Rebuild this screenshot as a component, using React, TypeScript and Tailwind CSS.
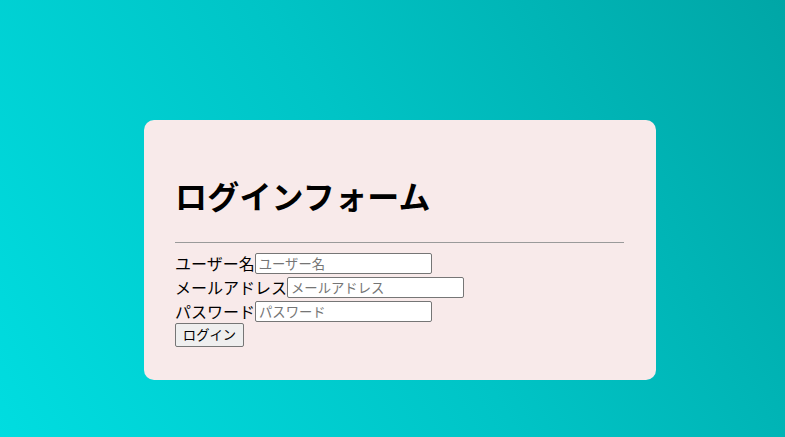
export default function App() {
  return (
    <div className="h-[437px] w-full overflow-hidden bg-[linear-gradient(60deg,#00dde0_0%,#00c4c6_50%,#00a6a6_100%)] pt-[120px] pl-[144px] font-['Noto_Sans_CJK_JP','Noto_Sans',sans-serif] text-black">

      <div className="w-[512px] h-[260px] rounded-[10px] bg-[#f8eaea] px-[31px] pt-[32px]">

        <h1 className="mt-[25px] text-[32px] leading-[37px] font-bold tracking-[0.2px]">
          ログインフォーム
        </h1>

        <hr className="mt-[28px] w-[449px] border-0 border-t border-[#9a9a9a]" />

        <div className="mt-[8px]">

          <div className="flex h-[24px] items-center text-[16px]">
            <span>ユーザー名</span>
            <input
              type="text"
              placeholder="ユーザー名"
              className="h-[21px] w-[177px] rounded-[2px] border border-[#767676] bg-white px-[3px] text-[13.33px] placeholder:text-[#757575] outline-none"
            />
          </div>

          <div className="flex h-[24px] items-center text-[16px]">
            <span>メールアドレス</span>
            <input
              type="email"
              placeholder="メールアドレス"
              className="h-[21px] w-[177px] rounded-[2px] border border-[#767676] bg-white px-[3px] text-[13.33px] placeholder:text-[#757575] outline-none"
            />
          </div>

          <div className="flex h-[24px] items-center text-[16px]">
            <span>パスワード</span>
            <input
              type="text"
              placeholder="パスワード"
              className="h-[21px] w-[177px] rounded-[2px] border border-[#767676] bg-white px-[3px] text-[13.33px] placeholder:text-[#757575] outline-none"
            />
          </div>

          <div className="flex h-[24px] items-center">
            <button className="h-[24px] w-[69px] rounded-[2px] border border-[#767676] bg-[#efefef] text-[13.33px] leading-none">
              ログイン
            </button>
          </div>

        </div>

      </div>

    </div>
  )
}
